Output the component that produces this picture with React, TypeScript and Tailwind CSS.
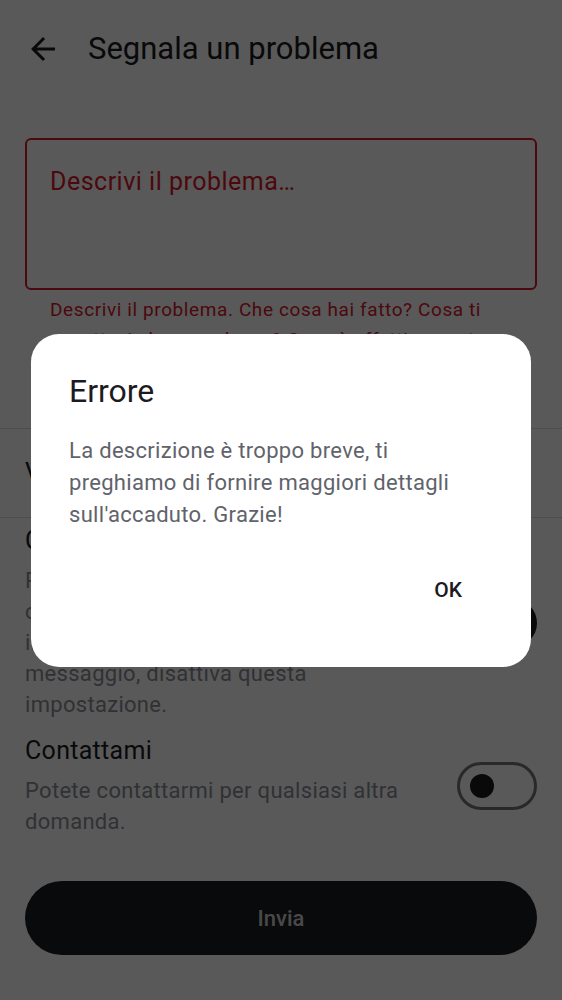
import { useState } from "react";

// back arrow (material "arrow_back")
function BackArrow(): JSX.Element {
  return (
    <svg viewBox="0 0 24 24" className="h-[36px] w-[36px] fill-[#1b1b1f]">
      <path d="M20 11H7.83l5.59-5.59L12 4l-8 8 8 8 1.41-1.41L7.83 13H20v-2z" />
    </svg>
  );
}

function Toggle({ on }: { on: boolean }): JSX.Element {
  return on ? (
    <div className="flex h-[48px] w-[80px] shrink-0 items-center justify-end rounded-full bg-[#1b1b1f] pr-[8px]">
      <div className="h-[32px] w-[32px] rounded-full bg-white" />
    </div>
  ) : (
    <div className="flex h-[48px] w-[80px] shrink-0 items-center rounded-full border-[3px] border-[#75777f] pl-[10px]">
      <div className="h-[24px] w-[24px] rounded-full bg-[#1b1b1f]" />
    </div>
  );
}

function SettingRow(props: {
  title: string;
  text: string;
  on: boolean;
}): JSX.Element {
  return (
    <div className="flex items-center gap-[40px] px-[25px]">
      <div className="flex-1">
        <p className="text-[25px] leading-[32px] tracking-[0.3px] text-[#1b1b1f]">
          {props.title}
        </p>
        <p className="mt-[8px] text-[22px] leading-[31px] tracking-[0.3px] text-[#8a8d95]">
          {props.text}
        </p>
      </div>
      <Toggle on={props.on} />
    </div>
  );
}

export default function App(): JSX.Element {
  const [open, setOpen] = useState(true);

  return (
    <div className="relative h-[1000px] w-full overflow-hidden bg-white font-[Roboto,sans-serif]">
      {/* Header */}
      <div className="flex h-[98px] items-center pl-[25px]">
        <BackArrow />
        <h1 className="ml-[27px] text-[31px] text-[#1b1b1f]">
          Segnala un problema
        </h1>
      </div>

      {/* Description field */}
      <div className="mt-[40px] px-[25px]">
        <div className="h-[152px] rounded-[6px] border-2 border-[#d8182c] px-[23px] pt-[26px]">
          <p className="text-[25px] leading-[32px] tracking-[0.5px] text-[#d8182c]">
            Descrivi il problema…
          </p>
        </div>
        <p className="mt-[5px] pl-[25px] pr-[20px] text-[19px] leading-[30px] tracking-[0.6px] text-[#d8182c]">
          Descrivi il problema. Che cosa hai fatto? Cosa ti aspettavi che
          accadesse? Cosa è effettivamente accaduto?
        </p>
      </div>

      <div className="mt-[43px] border-t border-[#dcdcdc]" />
      <div className="flex h-[88px] items-center px-[25px]">
        <p className="text-[25px] tracking-[0.3px] text-[#1b1b1f]">
          Visualizza i dati inviati
        </p>
      </div>
      <div className="border-t border-[#dcdcdc]" />

      <div className="mt-[7px]">
        <SettingRow
          title="Condividi i log"
          text="Per capire meglio il problema, condividiamo automaticamente i dati, inclusi i log. Per escluderli dal messaggio, disattiva questa impostazione."
          on={true}
        />
      </div>
      <div className="mt-[15px]">
        <SettingRow
          title="Contattami"
          text="Potete contattarmi per qualsiasi altra domanda."
          on={false}
        />
      </div>

      {/* Submit */}
      <div className="mt-[44px] px-[25px]">
        <button className="h-[74px] w-full rounded-full bg-[#1c1d21] text-[22px] font-medium text-[#d2d2d2]">
          Invia
        </button>
      </div>

      {/* Error dialog */}
      {open && (
        <div className="absolute inset-0 flex items-center justify-center bg-black/65">
          <div className="w-[500px] rounded-[28px] bg-white px-[38px] pt-[37px] pb-[52px]">
            <h2 className="text-[32px] leading-[40px] text-[#1b1b1f]">
              Errore
            </h2>
            <p className="mt-[24px] max-w-[410px] text-[22px] leading-[32px] tracking-[0.3px] text-[#5f636b]">
              La descrizione è troppo breve, ti preghiamo di fornire maggiori
              dettagli sull'accaduto. Grazie!
            </p>
            <div className="mt-[36px] flex justify-end pr-[15px]">
              <button
                onClick={() => setOpen(false)}
                className="h-[48px] px-[16px] text-[21px] font-medium text-[#1b1b1f]"
              >
                OK
              </button>
            </div>
          </div>
        </div>
      )}
    </div>
  );
}
